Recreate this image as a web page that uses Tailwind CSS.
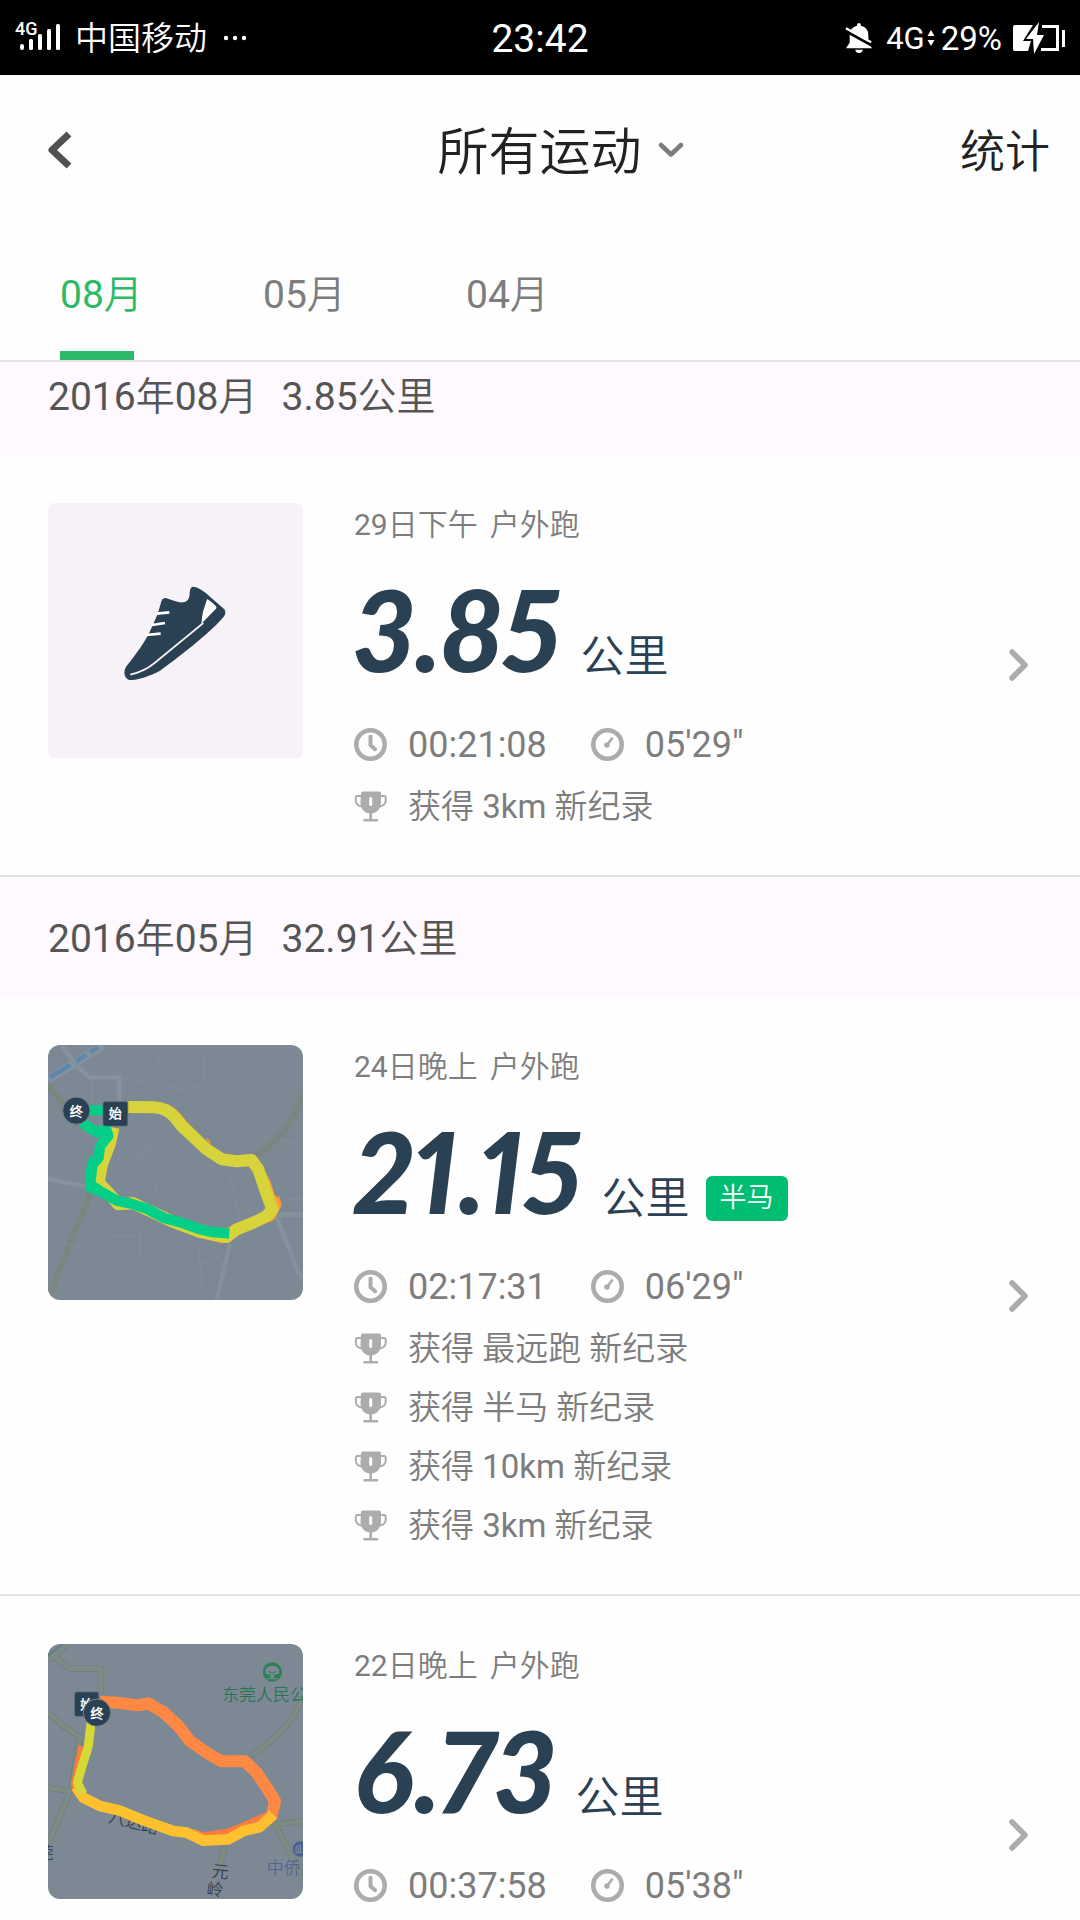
<!DOCTYPE html>
<html lang="zh-CN">
  <head>
    <meta charset="UTF-8" />
    <meta name="viewport" content="width=device-width, initial-scale=1.0" />
    <title>所有运动</title>
    <script src="https://cdn.jsdelivr.net/npm/@tailwindcss/browser@4"></script>
  </head>
  <body class="h-screen overflow-hidden flex flex-col bg-[#fefefe] text-[#7d7d7d] font-[Roboto,'Noto_Sans_CJK_SC_DemiLight','Noto_Sans_CJK_SC',sans-serif]">
    <!-- Shared icons -->
    <svg class="hidden" aria-hidden="true">
      <symbol id="icon-clock" viewBox="0 0 33 33">
        <circle cx="16.5" cy="16.5" r="14.2" fill="none" stroke="#acabad" stroke-width="4.6" />
        <path d="M16.5 8.8v8.4l4.6 4" fill="none" stroke="#acabad" stroke-width="4" stroke-linecap="round" stroke-linejoin="round" />
      </symbol>
      <symbol id="icon-pace" viewBox="0 0 33 33">
        <circle cx="16.5" cy="16.5" r="14.2" fill="none" stroke="#acabad" stroke-width="4.6" />
        <circle cx="16" cy="17" r="2.8" fill="#acabad" />
        <path d="M16 17l5-6.5" stroke="#acabad" stroke-width="2.6" stroke-linecap="round" />
      </symbol>
      <symbol id="icon-trophy" viewBox="0 0 33 33">
        <path d="M7 3.2Q7 1.5 9 1.5H25Q27 1.5 27 3.2V12.5C27 19 22.5 23.5 16.7 23.5S6.5 19 6.5 12.5Z" fill="#acabad" />
        <path d="M7 6H3.5Q1.8 6 1.8 8V11Q2.2 15.5 7.5 16.5M26.5 6H30Q31.7 6 31.7 8V11Q31.2 15.5 26 16.5" fill="none" stroke="#acabad" stroke-width="2" />
        <path d="M16.7 23V30M10.5 30.3H23" fill="none" stroke="#acabad" stroke-width="2.6" stroke-linecap="round" />
        <path d="M16.7 8.5V14.5" stroke="#fefefe" stroke-width="3" stroke-linecap="round" />
      </symbol>
      <symbol id="icon-next" viewBox="0 0 20 32">
        <path d="M3 3L16 16L3 29" fill="none" stroke="#acabad" stroke-width="5.5" stroke-linecap="round" stroke-linejoin="round" />
      </symbol>
    </svg>

    <!-- Status bar -->
    <div class="h-[75px] shrink-0 bg-black text-white grid grid-cols-[1fr_auto_1fr] items-center px-[15px]">
      <div class="flex items-center">
        <svg class="w-[46px] h-[34px]" viewBox="0 0 46 34" fill="#fff">
          <text x="0" y="14" font-size="18" font-weight="500">4G</text>
          <rect x="5" y="23" width="4" height="6" rx="2" />
          <rect x="14" y="18" width="4" height="11" rx="1.5" />
          <rect x="23" y="13" width="4" height="16" rx="1.5" />
          <rect x="32" y="8" width="4" height="21" rx="1.5" />
          <rect x="41" y="3" width="4" height="26" rx="1.5" />
        </svg>
        <span class="ml-[14px] pt-[2px] text-[33px] leading-none">中国移动</span>
        <svg class="ml-[16px] w-[24px] h-[6px]" viewBox="0 0 24 6" fill="#fff">
          <circle cx="3" cy="3" r="2.2" /><circle cx="12" cy="3" r="2.2" /><circle cx="21" cy="3" r="2.2" />
        </svg>
      </div>
      <span class="text-[39px] leading-none pt-1">23:42</span>
      <div class="flex items-center justify-end">
        <svg class="w-[28px] h-[34px]" viewBox="0 0 30 34" fill="#fff">
          <path d="M13 3Q13 1 15 1T17 3V4Q25 6 25 14V22L29 28H1L5 22V14Q5 6 13 4Z" />
          <path d="M11 29.5H19Q18.5 33 15 33T11 29.5Z" />
          <path d="M0 9L29 25" stroke="#000" stroke-width="3" />
          <path d="M1 6.5L28 21.5" stroke="#fff" stroke-width="2.5" />
        </svg>
        <span class="ml-[13px] text-[31px] leading-none pt-[2px]">4G</span>
        <svg class="ml-[2px] w-[8px] h-[16px]" viewBox="0 0 8 16" fill="#fff"><path d="M4 0L7.5 6H.5ZM4 16L7.5 10H.5Z" /></svg>
        <span class="ml-[6px] text-[33px] leading-none pt-[2px]">29%</span>
        <svg class="ml-[11px] w-[52px] h-[32px]" viewBox="0 0 52 32" fill="#fff">
          <path d="M2 3H20L10 19H18L15 29H2Q0 29 0 27V5Q0 3 2 3Z" />
          <path d="M26 0L13 17H20L21 32L31 13H24Z" />
          <path d="M29 4.5H44.5V27.5H28" fill="none" stroke="#fff" stroke-width="3" />
          <rect x="49" y="8" width="3" height="17" />
        </svg>
      </div>
    </div>

    <!-- Header -->
    <header class="h-[150px] shrink-0 grid grid-cols-[1fr_auto_1fr] items-center pl-12 pr-[30px] text-[#222]">
      <button type="button" aria-label="返回" class="justify-self-start">
        <svg class="w-[24px] h-[38px]" viewBox="0 0 24 38"><path d="M21 3L4 19L21 35" fill="none" stroke="#505250" stroke-width="7" stroke-linejoin="round" /></svg>
      </button>
      <div class="relative -ml-[18px]">
        <select aria-label="运动类型" class="block appearance-none bg-transparent pt-[6px] text-[51px] leading-[60px] outline-none">
          <option>所有运动</option>
        </select>
        <svg class="absolute left-full top-1/2 -translate-y-1/2 ml-[15px] w-[26px] h-[16px] pointer-events-none" viewBox="0 0 26 16">
          <path d="M3 3L13 12.5L23 3" fill="none" stroke="#7c7c7c" stroke-width="4.5" stroke-linecap="round" stroke-linejoin="round" />
        </svg>
      </div>
      <a href="#stats" class="justify-self-end pt-[6px] text-[45px] leading-[60px]">统计</a>
    </header>

    <!-- Month tabs -->
    <nav class="h-[137px] shrink-0 flex gap-[129px] px-[60px] border-b-2 border-[#e4e2e5] text-[39px] leading-[48px] whitespace-nowrap">
      <a href="#m08" class="w-[74px] pt-[46px] border-b-[9px] border-[#2dba66] text-[#2dba66]">08月</a>
      <a href="#m05" class="w-[74px] pt-[46px]">05月</a>
      <a href="#m04" class="w-[74px] pt-[46px]">04月</a>
    </nav>

    <!-- Run history -->
    <main class="flex-1 min-h-0 overflow-hidden">
      <section id="m08" class="-mt-[27px]">
        <h2 class="h-[120px] pt-1 flex items-center gap-[24px] px-12 bg-[#fdf9fe] text-[39px] text-[#555]"><span>2016年08月</span><span>3.85公里</span></h2>
        <article class="relative flex gap-[51px] px-12 pt-12 pb-[39px] border-b-2 border-[#e4e2e5]">
          <svg class="size-[255px] shrink-0 rounded-md bg-[#f6f2f7]" viewBox="54 39 765 765">
            <path d="M283 548C283 535 290 526 300 515C330 478 350 445 360 424L384 370L394 334Q400 320 414 326C435 333 450 338 460 337C472 335 480 325 479 308Q480 288 494 291C510 294 530 310 545 325L583 358Q591 370 580 382C545 425 430 515 390 542C360 558 325 570 298 570Q284 565 283 548Z" fill="#2a4154" />
            <path d="M301 554C330 547 350 538 370 522L520 399" fill="none" stroke="#f6f2f7" stroke-width="5" />
            <path d="M531 328Q535 326 558 349Q561 353 558 356L514 401Q516 380 519 365Z" fill="#fff" />
            <path d="M380 371L418 367M366 405L405 399M348 435L392 431" stroke="#fff" stroke-width="8" />
          </svg>
          <div>
            <p class="flex gap-3 text-[30px] leading-[44px]"><span>29日下午</span><span>户外跑</span></p>
            <p class="flex items-baseline gap-[20px] pt-[26px] pb-[25px] text-[#2a4154]">
              <span class="font-[Lato] font-black italic proportional-nums text-[112px] leading-[112px]">3.85</span>
              <span class="text-[44px] leading-[60px]">公里</span>
            </p>
            <div class="flex items-center gap-[44px] h-[65px] text-[36px]">
              <span class="flex items-center gap-[21px]"><svg class="size-[33px]"><use href="#icon-clock" /></svg>00:21:08</span>
              <span class="flex items-center gap-[21px]"><svg class="size-[33px]"><use href="#icon-pace" /></svg>05'29"</span>
            </div>
            <ul class="text-[33px] leading-[59px]">
              <li class="flex items-center gap-[21px]"><svg class="size-[33px]"><use href="#icon-trophy" /></svg>获得 3km 新纪录</li>
            </ul>
          </div>
          <a href="#run-0829" aria-label="查看详情" class="absolute right-[51px] top-1/2 -translate-y-1/2"><svg class="w-[20px] h-[32px]"><use href="#icon-next" /></svg></a>
        </article>
      </section>

      <section id="m05">
        <h2 class="h-[120px] pt-1 flex items-center gap-[24px] px-12 bg-[#fdf9fe] text-[39px] text-[#555]"><span>2016年05月</span><span>32.91公里</span></h2>
        <article class="relative flex gap-[51px] px-12 pt-12 pb-[39px] border-b-2 border-[#e4e2e5]">
          <svg class="size-[255px] shrink-0 rounded-xl bg-[#7c8995]" viewBox="24 27 765 765" fill="none">
            <!-- streets -->
            <path d="M24 130L190 27" stroke="#8593a0" stroke-width="26" />
            <path d="M30 124L90 87M108 76L140 56M150 50L172 34" stroke="#5e88ab" stroke-width="14" />
            <path d="M65 27L110 90L150 124H238V200M24 428L150 455M789 536H725L710 545L740 620L775 710L789 730M570 625L530 792" stroke="#85929c" stroke-width="13" />
            <path d="M24 150L75 210M152 470L95 610L32 770M789 175C765 240 730 310 645 358" stroke="#7c8680" stroke-width="20" />
            <path d="M238 124L350 145L420 158L490 150L495 40M490 155L580 230L620 310L640 360M305 27V125M360 50L350 110M345 300L290 380L270 440L275 500L300 600L295 700L330 792M390 280L300 370M285 425L350 435L345 470M200 600H300M180 660L130 750M560 380L600 545M475 625L490 792M470 690L540 660M24 600L180 660M730 490H789M720 310L789 330M155 124V200" stroke="#828f99" stroke-width="3" />
            <!-- route -->
            <path d="M265 213L340 214Q385 215 410 245L430 270L500 340L545 368L590 374L632 372L650 395L675 440L690 485L708 505L690 540L640 560L590 580L545 605L480 588L400 558L340 530L280 500L235 505L205 470L175 440L185 390L212 320L222 275" stroke="#fba22f" stroke-width="33" stroke-linejoin="round" />
            <path d="M265 213L340 214Q380 215 405 245L425 270L500 340L545 370L590 376L635 372L655 400L675 460L697 520L680 540L640 560L590 580L560 603L480 588L400 558L340 530L280 502L235 505L205 470L176 440L186 385L210 320L220 275" stroke="#d6d33b" stroke-width="36" stroke-linejoin="round" />
            <path d="M500 308L512 322M715 480L722 510" stroke="#ff8f3a" stroke-width="5" />
            <path d="M130 223H200M125 260L172 290L198 278L205 300L180 330L176 365L158 385L150 445L180 465L232 495L270 502L320 518L370 545L430 562L480 580L515 588L568 592" stroke="#04cf88" stroke-width="31" stroke-linejoin="round" />
            <path d="M162 365Q145 400 148 455L180 470" stroke="#04cf88" stroke-width="26" />
            <circle cx="109" cy="224" r="41" fill="#2a4154" stroke="#75828d" stroke-width="3" />
            <rect x="189" y="197" width="74" height="73" rx="6" fill="#2a4154" stroke="#5b6b78" stroke-width="2" />
            <text x="109" y="239" font-size="39" font-weight="bold" fill="#fff" text-anchor="middle">终</text>
            <text x="226" y="247" font-size="39" font-weight="bold" fill="#fff" text-anchor="middle">始</text>
          </svg>
          <div>
            <p class="flex gap-3 text-[30px] leading-[44px]"><span>24日晚上</span><span>户外跑</span></p>
            <p class="flex items-baseline gap-[20px] pt-[26px] pb-[25px] text-[#2a4154]">
              <span class="font-[Lato] font-black italic proportional-nums text-[112px] leading-[112px]">21.15</span>
              <span class="text-[44px] leading-[60px]">公里</span>
              <span class="self-end mb-[8px] -ml-1 px-[14px] rounded-md bg-[#00be71] text-white text-[27px] leading-[45px]">半马</span>
            </p>
            <div class="flex items-center gap-[44px] h-[65px] text-[36px]">
              <span class="flex items-center gap-[21px]"><svg class="size-[33px]"><use href="#icon-clock" /></svg>02:17:31</span>
              <span class="flex items-center gap-[21px]"><svg class="size-[33px]"><use href="#icon-pace" /></svg>06'29"</span>
            </div>
            <ul class="text-[33px] leading-[59px]">
              <li class="flex items-center gap-[21px]"><svg class="size-[33px]"><use href="#icon-trophy" /></svg>获得 最远跑 新纪录</li>
              <li class="flex items-center gap-[21px]"><svg class="size-[33px]"><use href="#icon-trophy" /></svg>获得 半马 新纪录</li>
              <li class="flex items-center gap-[21px]"><svg class="size-[33px]"><use href="#icon-trophy" /></svg>获得 10km 新纪录</li>
              <li class="flex items-center gap-[21px]"><svg class="size-[33px]"><use href="#icon-trophy" /></svg>获得 3km 新纪录</li>
            </ul>
          </div>
          <a href="#run-0524" aria-label="查看详情" class="absolute right-[51px] top-1/2 -translate-y-1/2"><svg class="w-[20px] h-[32px]"><use href="#icon-next" /></svg></a>
        </article>

        <article class="relative flex gap-[51px] min-h-[477px] px-12 pt-12 pb-[39px]">
          <svg class="size-[255px] shrink-0 rounded-xl bg-[#7c8995]" viewBox="24 24 765 765" fill="none">
            <!-- streets -->
            <path d="M24 58L75 24" stroke="#5e7f98" stroke-width="10" />
            <path d="M24 72L85 24M40 60L90 98H182V170M24 230L70 270L130 310M118 310L95 455L24 625M24 455L90 465M789 180C765 250 710 310 630 360M789 555L705 565L745 640L789 730M555 625L540 690" stroke="#6f7c78" stroke-width="18" />
            <path d="M24 72L85 24M40 60L90 98H182V170M24 230L70 270L130 310M118 310L95 455L24 625M24 455L90 465M789 180C765 250 710 310 630 360M789 555L705 565L745 640L789 730M555 625L540 690" stroke="#7e8b85" stroke-width="14" />
            <path d="M182 98L260 115L390 135L465 128L472 30M465 130L560 220L600 310M260 24V110M330 50L320 110M85 100V190L130 200M350 265L230 430L220 540M290 390L320 430M540 400L575 560M160 640H230L225 530M250 640L265 760M430 625L445 789M425 660L480 665M150 640L110 760M740 500H789" stroke="#848692" stroke-width="3" />
            <!-- place names -->
            <circle cx="697" cy="108" r="29" fill="#2c8052" />
            <path d="M692 128V115Q675 118 676 105Q677 90 697 89Q717 90 718 105Q719 118 702 115V128Z" fill="#7c8995" />
            <path d="M680 128H714" stroke="#7c8995" stroke-width="3" />
            <path d="M686 106L697 112L708 106" stroke="#2c8052" stroke-width="3" />
            <text x="546" y="195" font-size="51" fill="#2a7550" font-weight="500">东莞人民公</text>
            <circle cx="781" cy="639" r="23" fill="#4c6193" />
            <path d="M768 650V633L781 626V650M775 634V650M768 650H789" stroke="#8291a6" stroke-width="3" />
            <text x="680" y="713" font-size="51" fill="#506591">中侨大</text>
            <text x="514" y="722" font-size="51" fill="#35404a" transform="rotate(6 514 722)">元</text>
            <text x="498" y="776" font-size="51" fill="#35404a" transform="rotate(6 498 776)">岭</text>
            <text x="-10" y="668" font-size="51" fill="#35404a">莞</text>
            <text x="203" y="558" font-size="51" fill="#35404a" transform="rotate(14 203 558)">八达路</text>
            <!-- route -->
            <path d="M122 330L100 445L108 470L125 480" stroke="#ff7a3d" stroke-width="14" stroke-linejoin="round" />
            <path d="M180 197L230 200L295 208L325 202L370 228L415 270L450 315L500 350L545 376L615 376L650 410L680 455L705 495L695 540L670 560" stroke="#ff8843" stroke-width="36" stroke-linejoin="round" />
            <path d="M460 590L490 600L560 590L600 575L690 535" stroke="#ff7a3d" stroke-width="22" />
            <path d="M700 535L660 573L610 585L565 610L530 612L490 614L440 590L400 585L330 560L285 543L240 524L180 510L130 485L108 452" stroke="#fdc02f" stroke-width="32" stroke-linejoin="round" />
            <path d="M153 262L145 330L125 395L112 440L128 472" stroke="#d6d835" stroke-width="27" stroke-linejoin="round" />
            <path d="M240 210L325 210L375 240M640 385L692 490V535" stroke="#c77556" stroke-width="1.5" stroke-dasharray="8 4" />
            <rect x="104" y="168" width="72" height="73" rx="6" fill="#2a4154" stroke="#5b6b78" stroke-width="2" />
            <text x="140" y="218" font-size="39" font-weight="bold" fill="#fff" text-anchor="middle">始</text>
            <circle cx="171" cy="230" r="41" fill="#2a4154" stroke="#75828d" stroke-width="3" />
            <text x="171" y="245" font-size="39" font-weight="bold" fill="#fff" text-anchor="middle">终</text>
          </svg>
          <div>
            <p class="flex gap-3 text-[30px] leading-[44px]"><span>22日晚上</span><span>户外跑</span></p>
            <p class="flex items-baseline gap-[20px] pt-[26px] pb-[25px] text-[#2a4154]">
              <span class="font-[Lato] font-black italic proportional-nums text-[112px] leading-[112px]">6.73</span>
              <span class="text-[44px] leading-[60px]">公里</span>
            </p>
            <div class="flex items-center gap-[44px] h-[65px] text-[36px]">
              <span class="flex items-center gap-[21px]"><svg class="size-[33px]"><use href="#icon-clock" /></svg>00:37:58</span>
              <span class="flex items-center gap-[21px]"><svg class="size-[33px]"><use href="#icon-pace" /></svg>05'38"</span>
            </div>
          </div>
          <a href="#run-0522" aria-label="查看详情" class="absolute right-[51px] top-1/2 -translate-y-1/2"><svg class="w-[20px] h-[32px]"><use href="#icon-next" /></svg></a>
        </article>
      </section>
    </main>
  </body>
</html>
